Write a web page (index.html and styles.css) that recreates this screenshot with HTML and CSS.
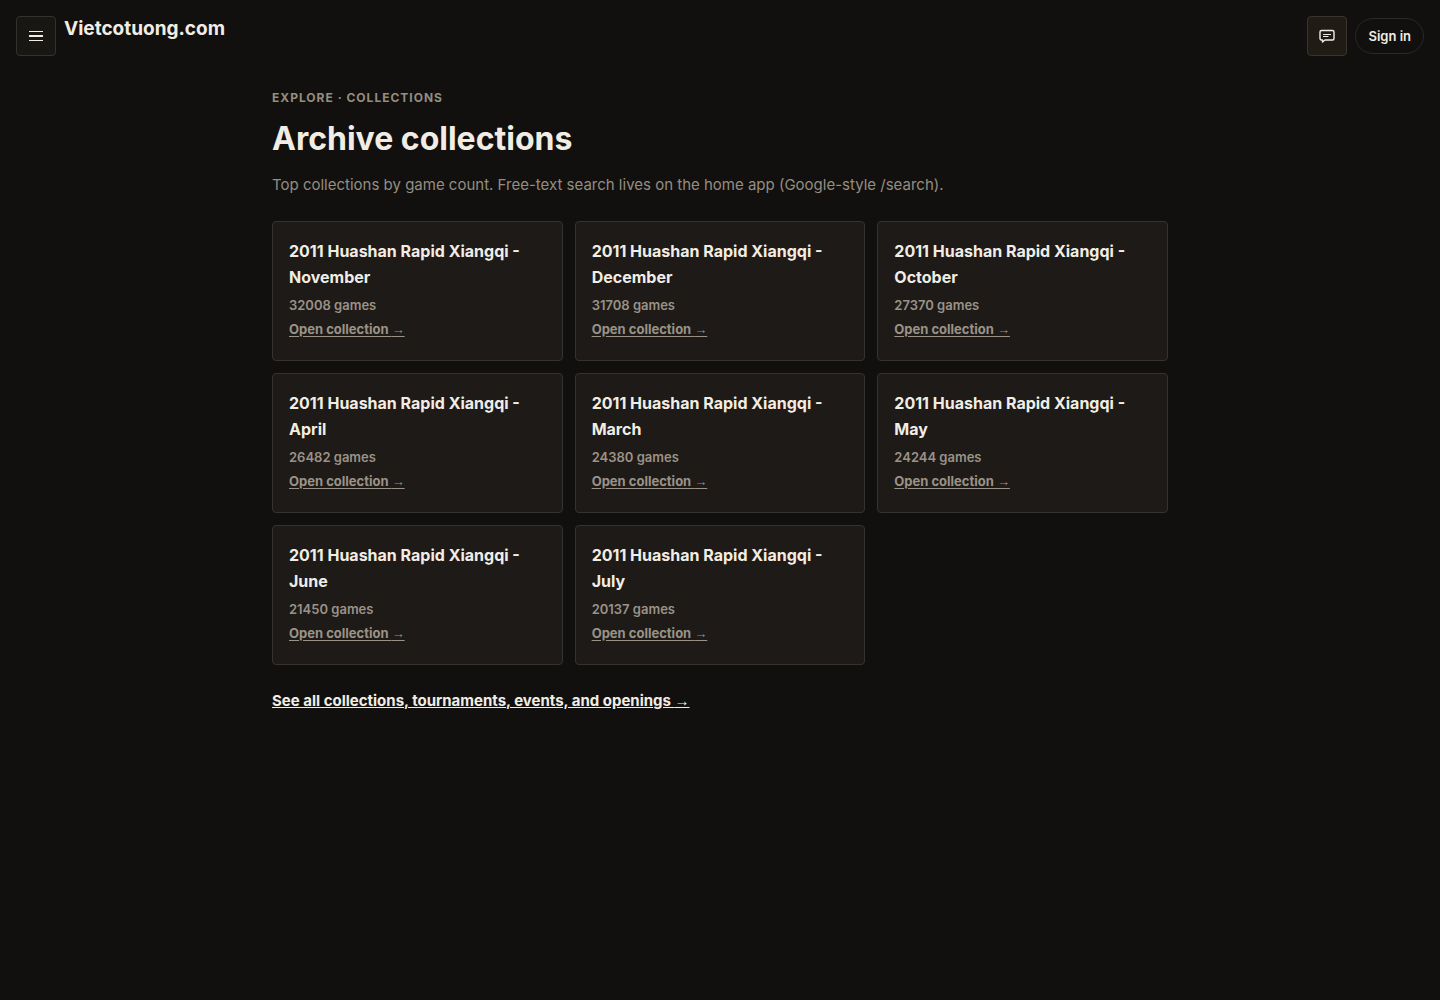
FILE: index.html
```html
<!DOCTYPE html>
<html lang="en">
<head>
	<meta charset="UTF-8">
	<meta name="viewport" content="width=device-width, initial-scale=1.0">
	<title>Archive collections - Vietcotuong.com</title>
	<link rel="stylesheet" href="styles.css">
</head>
<body>
	<header class="topbar">
		<button class="icon-btn" type="button" aria-label="Menu">
			<svg width="14" height="12" viewBox="0 0 14 12" fill="currentColor">
				<path d="M0 1h14v1H0zM0 5h14v2H0zM0 10h14v1H0z"/>
			</svg>
		</button>
		<a class="brand" href="/">Vietcotuong.com</a>
		<div class="actions">
			<button class="icon-btn chat-btn" type="button" aria-label="Feedback">
				<svg width="18" height="18" viewBox="0 0 18 18" fill="none" stroke="currentColor" stroke-width="1.4" stroke-linecap="round" stroke-linejoin="round">
					<path d="M3.500 3.500h11a1.500 1.500 0 0 1 1.500 1.500v6.500a1.500 1.500 0 0 1-1.500 1.500H7l-2.500 2v-2h-1A1.500 1.500 0 0 1 2 11.500V5A1.500 1.500 0 0 1 3.500 3.500z"/>
					<path d="M5.500 7.500h7M5.500 9.500h4.500" stroke-width="1.2"/>
				</svg>
			</button>
			<button class="signin-btn" type="button">Sign in</button>
		</div>
	</header>

	<main class="page">
		<p class="kicker">Explore · Collections</p>
		<h1>Archive collections</h1>
		<p class="lead">Top collections by game count. Free-text search lives on the home app (Google-style /search).</p>

		<div class="grid">
			<article class="card">
				<h2>2011 Huashan Rapid Xiangqi - November</h2>
				<p>32008 games</p>
				<a href="#november">Open collection <span class="arrow">→</span></a>
			</article>
			<article class="card">
				<h2>2011 Huashan Rapid Xiangqi - December</h2>
				<p>31708 games</p>
				<a href="#december">Open collection <span class="arrow">→</span></a>
			</article>
			<article class="card">
				<h2>2011 Huashan Rapid Xiangqi - October</h2>
				<p>27370 games</p>
				<a href="#october">Open collection <span class="arrow">→</span></a>
			</article>
			<article class="card">
				<h2>2011 Huashan Rapid Xiangqi - April</h2>
				<p>26482 games</p>
				<a href="#april">Open collection <span class="arrow">→</span></a>
			</article>
			<article class="card">
				<h2>2011 Huashan Rapid Xiangqi - March</h2>
				<p>24380 games</p>
				<a href="#march">Open collection <span class="arrow">→</span></a>
			</article>
			<article class="card">
				<h2>2011 Huashan Rapid Xiangqi - May</h2>
				<p>24244 games</p>
				<a href="#may">Open collection <span class="arrow">→</span></a>
			</article>
			<article class="card">
				<h2>2011 Huashan Rapid Xiangqi - June</h2>
				<p>21450 games</p>
				<a href="#june">Open collection <span class="arrow">→</span></a>
			</article>
			<article class="card">
				<h2>2011 Huashan Rapid Xiangqi - July</h2>
				<p>20137 games</p>
				<a href="#july">Open collection <span class="arrow">→</span></a>
			</article>
		</div>

		<a class="see-all" href="#all">See all collections, tournaments, events, and openings <span class="arrow">→</span></a>
	</main>
</body>
</html>
```
FILE: styles.css
```css
* {
	box-sizing: border-box;
}

body {
	margin: 0;
	background: #11100e;
	color: #f2ede4;
	font-family: Inter, "Liberation Sans", sans-serif;
	font-size: 16px;
	line-height: 26px;
}

button {
	font-family: inherit;
	color: inherit;
	cursor: pointer;
}

.topbar {
	display: flex;
	align-items: flex-start;
	gap: 8px;
	padding: 16px 16px 0;
}

.icon-btn {
	display: flex;
	align-items: center;
	justify-content: center;
	width: 40px;
	height: 40px;
	padding: 0;
	background: #181713;
	border: 1px solid #34322e;
	border-radius: 4px;
}

.chat-btn {
	background: #201c15;
	border-color: #39342b;
}

.brand {
	color: inherit;
	font-size: 19px;
	font-weight: 700;
	line-height: 26px;
	text-decoration: none;
}

.actions {
	display: flex;
	align-items: center;
	gap: 8px;
	margin-left: auto;
}

.signin-btn {
	height: 36px;
	padding: 0 12px;
	background: #11100e;
	border: 1px solid #2b2926;
	border-radius: 18px;
	font-size: 13px;
	font-weight: 600;
}

.page {
	max-width: 928px;
	margin: 0 auto;
	padding: 32px 16px;
}

.kicker {
	margin: 0;
	color: #958d80;
	font-size: 12px;
	font-weight: 700;
	line-height: 20px;
	letter-spacing: 1px;
	text-transform: uppercase;
}

h1 {
	margin: 12px 0 14px;
	font-size: 32px;
	font-weight: 700;
	line-height: 38px;
}

.lead {
	margin: 0 0 24px;
	color: #958d80;
	font-size: 15px;
	line-height: 25px;
}

.grid {
	display: grid;
	grid-template-columns: repeat(auto-fill, minmax(260px, 1fr));
	gap: 12px;
}

.card {
	display: flex;
	flex-direction: column;
	align-items: flex-start;
	padding: 16px 16px 20px;
	background: #1d1a17;
	border: 1px solid #353330;
	border-radius: 4px;
	color: #9b9287;
	font-size: 13px;
	font-weight: 600;
	line-height: 22px;
}

.card h2 {
	margin: 0 0 4px;
	color: #f2ede4;
	font-size: 16px;
	font-weight: 700;
	line-height: 26px;
}

.card p {
	margin: 0 0 2px;
}

.card a {
	color: inherit;
	font-weight: 700;
	text-underline-offset: 2px;
}

.see-all {
	display: inline-block;
	margin-top: 24px;
	color: inherit;
	font-size: 15px;
	font-weight: 700;
	line-height: 24px;
}

.arrow {
	font-family: "Liberation Sans", sans-serif;
	line-height: 1;
}
```
